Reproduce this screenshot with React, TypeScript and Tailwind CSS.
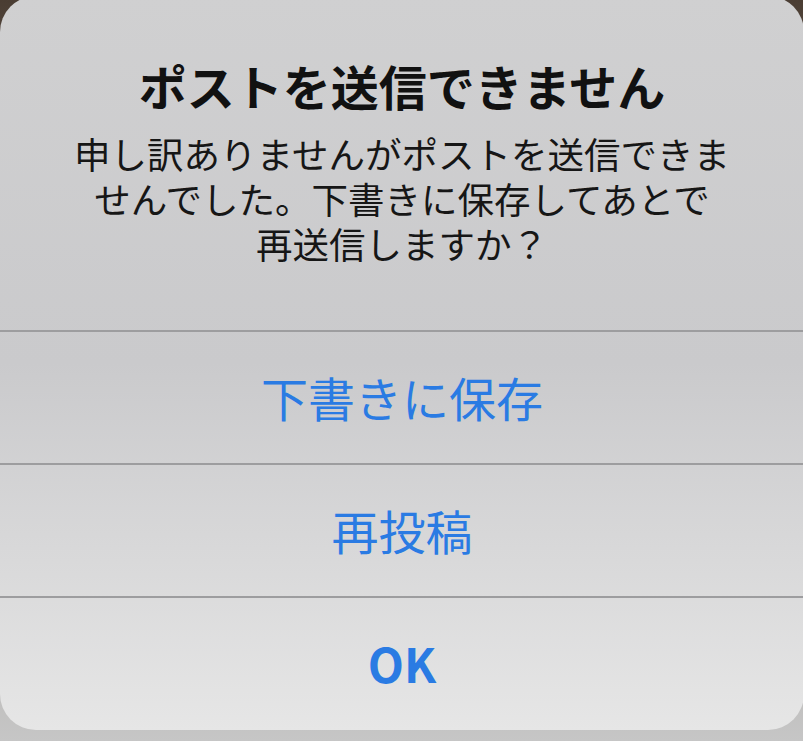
import React from 'react'

const font = { fontFamily: '"Noto Sans CJK JP", "Noto Sans", sans-serif' }

const actions = [
  { label: '下書きに保存', bold: false },
  { label: '再投稿', bold: false },
  { label: 'OK', bold: true },
]

export default function App() {
  return (
    <div
      className="w-[803px] h-[741px] overflow-hidden bg-gradient-to-b from-[#4a3d33] via-[#9c958e] to-[#c6c6c6]"
      style={font}
    >
      <div className="-mt-[4px] h-[734px] w-[804px] rounded-[36px] overflow-hidden flex flex-col bg-gradient-to-b from-[#d0d0d1] via-[#cacacc] to-[#e6e6e6]">
        <div className="pt-[61px] pb-[64px] px-8 flex flex-col items-center text-center">
          <h1 className="text-[48px] leading-[56px] font-bold text-[#111111]">
            ポストを送信できません
          </h1>
          <p className="mt-[18px] text-[36.5px] leading-[45px] text-[#161616]">
            申し訳ありませんがポストを送信できま
            <br />
            せんでした。下書きに保存してあとで
            <br />
            再送信しますか？
          </p>
        </div>
        {actions.map((a) => (
          <button
            key={a.label}
            className={`h-[133px] shrink-0 w-full border-t-2 border-[#9d9d9f] flex items-center justify-center text-[47px] text-[#2a7be3] ${a.bold ? 'font-bold' : 'font-normal'}`}
          >
            {a.label}
          </button>
        ))}
      </div>
    </div>
  )
}
